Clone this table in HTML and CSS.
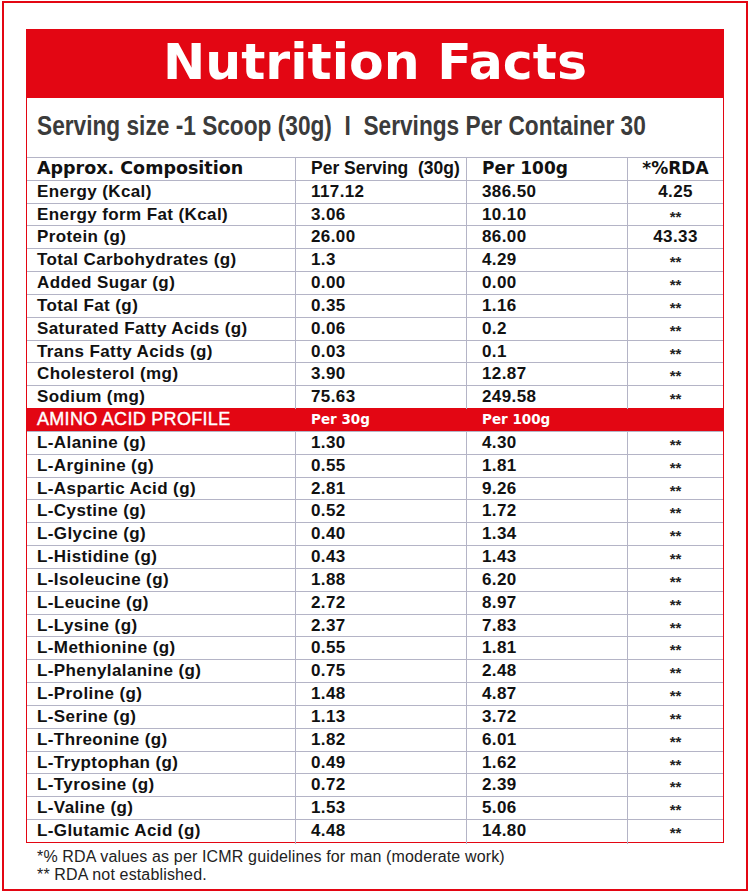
FILE: index.html
```html
<!DOCTYPE html>
<html lang="en">
<head>
<meta charset="utf-8">
<title>Nutrition Facts</title>
<link rel="stylesheet" href="styles.css">
</head>
<body>
<div class="page">
  <div class="panel">
    <div class="title">Nutrition Facts</div>
    <div class="serving"><span class="serving-text">Serving size -1 Scoop (30g)&nbsp; I &nbsp;Servings Per Container 30</span></div>
    <div class="table">
      <div class="row head"><div class="c c1">Approx. Composition</div><div class="c c2">Per Serving&nbsp; (30g)</div><div class="c c3">Per 100g</div><div class="c c4">*%RDA</div></div>
      <div class="row"><div class="c c1">Energy (Kcal)</div><div class="c c2">117.12</div><div class="c c3">386.50</div><div class="c c4">4.25</div></div>
      <div class="row"><div class="c c1">Energy form Fat (Kcal)</div><div class="c c2">3.06</div><div class="c c3">10.10</div><div class="c c4"><span class="ast">**</span></div></div>
      <div class="row"><div class="c c1">Protein (g)</div><div class="c c2">26.00</div><div class="c c3">86.00</div><div class="c c4">43.33</div></div>
      <div class="row"><div class="c c1">Total Carbohydrates (g)</div><div class="c c2">1.3</div><div class="c c3">4.29</div><div class="c c4"><span class="ast">**</span></div></div>
      <div class="row"><div class="c c1">Added Sugar (g)</div><div class="c c2">0.00</div><div class="c c3">0.00</div><div class="c c4"><span class="ast">**</span></div></div>
      <div class="row"><div class="c c1">Total Fat (g)</div><div class="c c2">0.35</div><div class="c c3">1.16</div><div class="c c4"><span class="ast">**</span></div></div>
      <div class="row"><div class="c c1">Saturated Fatty Acids (g)</div><div class="c c2">0.06</div><div class="c c3">0.2</div><div class="c c4"><span class="ast">**</span></div></div>
      <div class="row"><div class="c c1">Trans Fatty Acids (g)</div><div class="c c2">0.03</div><div class="c c3">0.1</div><div class="c c4"><span class="ast">**</span></div></div>
      <div class="row"><div class="c c1">Cholesterol (mg)</div><div class="c c2">3.90</div><div class="c c3">12.87</div><div class="c c4"><span class="ast">**</span></div></div>
      <div class="row"><div class="c c1">Sodium (mg)</div><div class="c c2">75.63</div><div class="c c3">249.58</div><div class="c c4"><span class="ast">**</span></div></div>
      <div class="row amino"><div class="c c1">AMINO ACID PROFILE</div><div class="c c2">Per 30g</div><div class="c c3">Per 100g</div><div class="c c4"></div></div>
      <div class="row"><div class="c c1">L-Alanine (g)</div><div class="c c2">1.30</div><div class="c c3">4.30</div><div class="c c4"><span class="ast">**</span></div></div>
      <div class="row"><div class="c c1">L-Arginine (g)</div><div class="c c2">0.55</div><div class="c c3">1.81</div><div class="c c4"><span class="ast">**</span></div></div>
      <div class="row"><div class="c c1">L-Aspartic Acid (g)</div><div class="c c2">2.81</div><div class="c c3">9.26</div><div class="c c4"><span class="ast">**</span></div></div>
      <div class="row"><div class="c c1">L-Cystine (g)</div><div class="c c2">0.52</div><div class="c c3">1.72</div><div class="c c4"><span class="ast">**</span></div></div>
      <div class="row"><div class="c c1">L-Glycine (g)</div><div class="c c2">0.40</div><div class="c c3">1.34</div><div class="c c4"><span class="ast">**</span></div></div>
      <div class="row"><div class="c c1">L-Histidine (g)</div><div class="c c2">0.43</div><div class="c c3">1.43</div><div class="c c4"><span class="ast">**</span></div></div>
      <div class="row"><div class="c c1">L-Isoleucine (g)</div><div class="c c2">1.88</div><div class="c c3">6.20</div><div class="c c4"><span class="ast">**</span></div></div>
      <div class="row"><div class="c c1">L-Leucine (g)</div><div class="c c2">2.72</div><div class="c c3">8.97</div><div class="c c4"><span class="ast">**</span></div></div>
      <div class="row"><div class="c c1">L-Lysine (g)</div><div class="c c2">2.37</div><div class="c c3">7.83</div><div class="c c4"><span class="ast">**</span></div></div>
      <div class="row"><div class="c c1">L-Methionine (g)</div><div class="c c2">0.55</div><div class="c c3">1.81</div><div class="c c4"><span class="ast">**</span></div></div>
      <div class="row"><div class="c c1">L-Phenylalanine (g)</div><div class="c c2">0.75</div><div class="c c3">2.48</div><div class="c c4"><span class="ast">**</span></div></div>
      <div class="row"><div class="c c1">L-Proline (g)</div><div class="c c2">1.48</div><div class="c c3">4.87</div><div class="c c4"><span class="ast">**</span></div></div>
      <div class="row"><div class="c c1">L-Serine (g)</div><div class="c c2">1.13</div><div class="c c3">3.72</div><div class="c c4"><span class="ast">**</span></div></div>
      <div class="row"><div class="c c1">L-Threonine (g)</div><div class="c c2">1.82</div><div class="c c3">6.01</div><div class="c c4"><span class="ast">**</span></div></div>
      <div class="row"><div class="c c1">L-Tryptophan (g)</div><div class="c c2">0.49</div><div class="c c3">1.62</div><div class="c c4"><span class="ast">**</span></div></div>
      <div class="row"><div class="c c1">L-Tyrosine (g)</div><div class="c c2">0.72</div><div class="c c3">2.39</div><div class="c c4"><span class="ast">**</span></div></div>
      <div class="row"><div class="c c1">L-Valine (g)</div><div class="c c2">1.53</div><div class="c c3">5.06</div><div class="c c4"><span class="ast">**</span></div></div>
      <div class="row"><div class="c c1">L-Glutamic Acid (g)</div><div class="c c2">4.48</div><div class="c c3">14.80</div><div class="c c4"><span class="ast">**</span></div></div>
    </div>
  </div>
  <div class="notes">
    <p>*% RDA values as per ICMR guidelines for man (moderate work)</p>
    <p>** RDA not established.</p>
  </div>
</div>
</body>
</html>
```

FILE: styles.css
```css
body {
  margin: 0;
  background: #fff;
  font-family: "Liberation Sans", Arial, sans-serif;
  color: #111;
}

.page {
  margin: 1px 0 0 2px;
  width: 746px;
  height: 890px;
  box-sizing: border-box;
  border: 2px solid #e30613;
  padding: 26px 0 0 22px;
}

.panel {
  width: 698px;
  box-sizing: border-box;
  border: 1px solid #e30613;
}

.title {
  height: 68px;
  box-sizing: border-box;
  padding-bottom: 4px;
  background: #e30613;
  color: #fff;
  font-family: "DejaVu Sans", sans-serif;
  font-weight: bold;
  font-size: 50.5px;
  line-height: 64px;
  text-align: center;
}

.serving {
  height: 59px;
  box-sizing: border-box;
  padding: 0 0 3px 10px;
  overflow: hidden;
  font-family: "Liberation Sans", sans-serif;
  font-weight: bold;
  font-size: 28px;
  line-height: 56px;
  color: #3b3b3b;
  white-space: nowrap;
}

.serving-text {
  display: inline-block;
  transform: scaleX(0.81);
  transform-origin: 0 50%;
}

.row {
  display: grid;
  grid-template-columns: 269px 171px 161px 95px;
  height: 22.83px;
  box-sizing: border-box;
  border-top: 1px solid #b4b4c6;
}

.c {
  border-right: 1px solid #b4b4c6;
  padding-left: 15px;
  font-weight: bold;
  font-size: 17px;
  line-height: 21.83px;
  letter-spacing: 0.4px;
  white-space: nowrap;
}

.c1 {
  padding-left: 10px;
}

.c4 {
  border-right: 0;
  padding-left: 0;
  text-align: center;
}

.ast {
  font-weight: bold;
  font-size: 15px;
  letter-spacing: 0;
  vertical-align: -2px;
  color: #222;
}

.head .c1,
.head .c3,
.head .c4 {
  font-family: "DejaVu Sans", sans-serif;
  letter-spacing: 0;
}

.head .c1 {
  font-size: 17.5px;
}

.head .c2 {
  font-size: 17.5px;
  letter-spacing: 0;
}

.amino {
  background: #e30613;
  border-top-color: #e30613;
}

.amino .c {
  border-right-color: #e30613;
  color: #fff;
}

.amino .c1 {
  font-weight: normal;
  font-size: 18px;
  letter-spacing: 0.3px;
  -webkit-text-stroke: 0.4px #fff;
}

.amino .c2,
.amino .c3 {
  font-family: "DejaVu Sans", sans-serif;
  font-size: 13.5px;
  letter-spacing: 0;
}

.notes {
  padding: 5px 0 0 11px;
  font-size: 16px;
  line-height: 18px;
  letter-spacing: 0.15px;
  color: #222;
}

.notes p {
  margin: 0;
}
```
